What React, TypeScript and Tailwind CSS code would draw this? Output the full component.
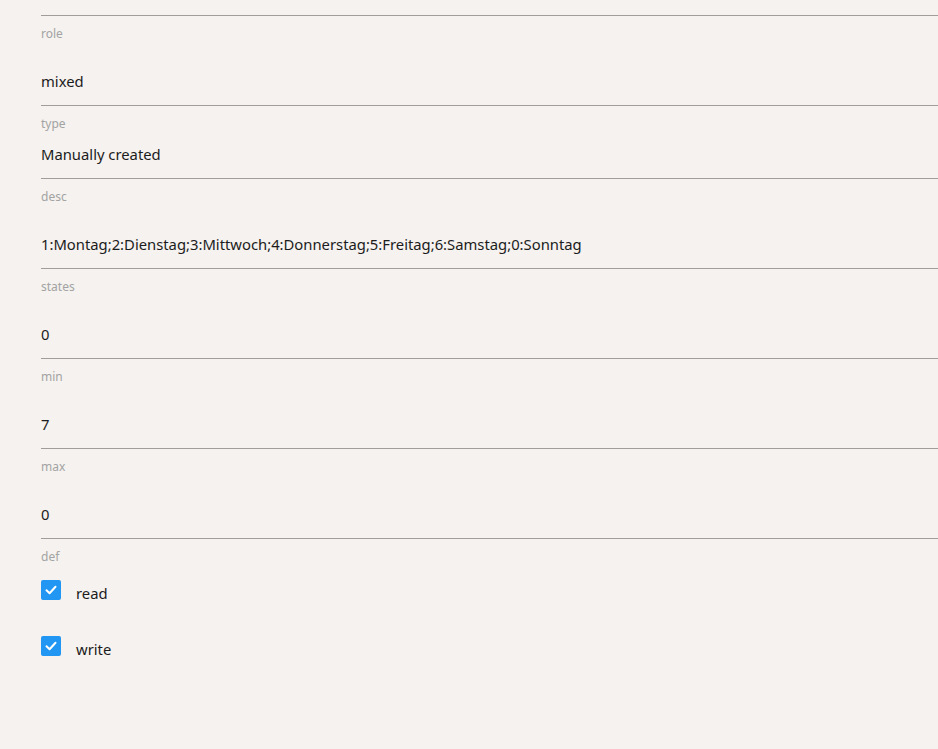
import React from "react";

const fields: { label: string; value: string; h: string }[] = [
  { label: "role", value: "mixed", h: "h-[90px]" },
  { label: "type", value: "Manually created", h: "h-[73px]" },
  { label: "desc", value: "1:Montag;2:Dienstag;3:Mittwoch;4:Donnerstag;5:Freitag;6:Samstag;0:Sonntag", h: "h-[90px]" },
  { label: "states", value: "0", h: "h-[90px]" },
  { label: "min", value: "7", h: "h-[90px]" },
  { label: "max", value: "0", h: "h-[90px]" },
];

function Check({ label }: { label: string }) {
  return (
    <div className="flex items-start gap-[15px] h-[20px]">
      <div className="w-[20px] h-[20px] rounded-[2px] bg-[#2196f3] flex items-center justify-center">
        <svg width="14" height="14" viewBox="0 0 14 14" fill="none">
          <path d="M2.5 7.2 L5.6 10.2 L11.5 3.8" stroke="#ffffff" strokeWidth="2" strokeLinecap="round" strokeLinejoin="round" />
        </svg>
      </div>
      <span className="mt-[3px] text-[14.8px] leading-[20px] text-[#1c1c1c]">{label}</span>
    </div>
  );
}

export default function App() {
  return (
    <div
      className="w-[938px] h-[749px] bg-[#f5f2ef] overflow-hidden"
      style={{ fontFamily: '"Noto Sans", "Open Sans", sans-serif' }}
    >
      <div className="pl-[41px] pt-[15px]">
        <div className="h-px bg-[#a19d9a]" />
        {fields.map((f) => (
          <div key={f.label} className={`${f.h} border-b border-[#a19d9a] flex flex-col justify-between pt-[10px] pb-[14px]`}>
            <div className="text-[12px] leading-[16px] text-[#a3a3a3]">{f.label}</div>
            <div className="text-[14.8px] leading-[20px] text-[#1c1c1c]">{f.value}</div>
          </div>
        ))}
        <div className="pt-[10px]">
          <div className="text-[12px] leading-[16px] text-[#a3a3a3]">def</div>
          <div className="mt-[15px] flex flex-col gap-[36px]">
            <Check label="read" />
            <Check label="write" />
          </div>
        </div>
      </div>
    </div>
  );
}
